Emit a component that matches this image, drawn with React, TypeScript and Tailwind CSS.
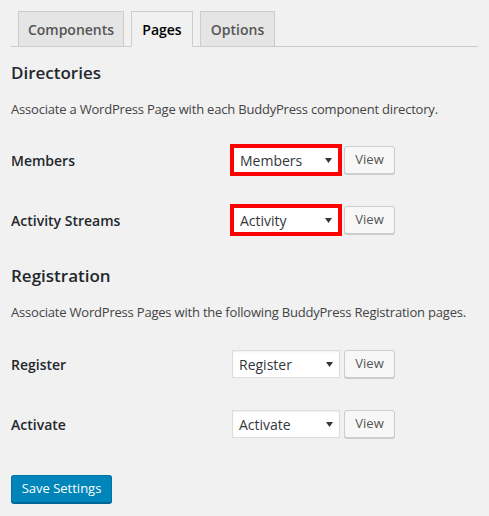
import type { ReactNode } from "react";

const FONT = { fontFamily: '"Open Sans", "DejaVu Sans", sans-serif' };

type Row = { label: string; value: string; highlight?: boolean };

const directories: Row[] = [
  { label: "Members", value: "Members", highlight: true },
  { label: "Activity Streams", value: "Activity", highlight: true },
];

const registration: Row[] = [
  { label: "Register", value: "Register" },
  { label: "Activate", value: "Activate" },
];

function Tab({ children, active, width }: { children: ReactNode; active?: boolean; width: string }) {
  return (
    <div
      className={
        "-mb-px flex h-[36px] items-center justify-center whitespace-nowrap border border-[#ccc] text-[14px] font-semibold " +
        width +
        (active ? " border-b-[#f1f1f1] bg-[#f1f1f1] text-black" : " bg-[#e5e5e5] text-[#555]")
      }
    >
      {children}
    </div>
  );
}

function PageSelect({ value, highlight }: { value: string; highlight?: boolean }) {
  return (
    <div
      className={
        "flex h-[28px] w-[108px] items-center justify-between bg-white pl-[6px] pr-[6px] text-[14px] text-[#32373c] " +
        (highlight
          ? "border-2 border-[#ff0000] outline-[2px] outline-[#ff0000]"
          : "border border-[#ddd] shadow-[inset_0_1px_2px_rgba(0,0,0,0.07)]")
      }
    >
      <span>{value}</span>
      <svg width="7" height="5" viewBox="0 0 7 5">
        <path d="M0 0h7L3.5 5z" fill="#32373c" />
      </svg>
    </div>
  );
}

function SettingRow({ row }: { row: Row }) {
  return (
    <div className="flex h-[60px] items-center">
      <div className="w-[221px] text-[14px] font-semibold text-[#23282d]">{row.label}</div>
      <div className="flex items-center gap-[4px]">
        <PageSelect value={row.value} highlight={row.highlight} />
        <button className="h-[28px] w-[51px] rounded-[3px] border border-[#ccc] bg-[#f7f7f7] text-[13px] text-[#555] shadow-[0_1px_0_#ccc]">
          View
        </button>
      </div>
    </div>
  );
}

export default function App() {
  return (
    <div className="min-h-[516px] w-[489px] bg-[#f1f1f1] pl-[11px] pr-[11px] pt-[11px]" style={FONT}>
      <div className="flex gap-[7px] border-b border-[#ccc] pl-[7px]">
        <Tab width="w-[106px]">Components</Tab>
        <Tab width="w-[62px]" active>
          Pages
        </Tab>
        <Tab width="w-[75px]">Options</Tab>
      </div>

      <h2 className="mt-[14px] text-[17px] font-semibold leading-[24px] text-[#23282d]">Directories</h2>
      <p className="mt-[12px] whitespace-nowrap text-[13px] leading-[24px] tracking-[-0.2px] text-[#444]">
        Associate a WordPress Page with each BuddyPress component directory.
      </p>
      <div className="mt-[9px]">
        {directories.map((row) => (
          <SettingRow key={row.label} row={row} />
        ))}
      </div>

      <h2 className="mt-[14px] text-[17px] font-semibold leading-[24px] text-[#23282d]">Registration</h2>
      <p className="mt-[12px] whitespace-nowrap text-[13px] leading-[24px] tracking-[-0.2px] text-[#444]">
        Associate WordPress Pages with the following BuddyPress Registration pages.
      </p>
      <div className="mt-[10px]">
        {registration.map((row) => (
          <SettingRow key={row.label} row={row} />
        ))}
      </div>

      <button className="mt-[21px] h-[28px] w-[101px] rounded-[3px] border border-[#0073aa] border-b-[#006799] bg-[#0085ba] text-[13px] text-white shadow-[0_1px_0_#006799]">
        Save Settings
      </button>
    </div>
  );
}
